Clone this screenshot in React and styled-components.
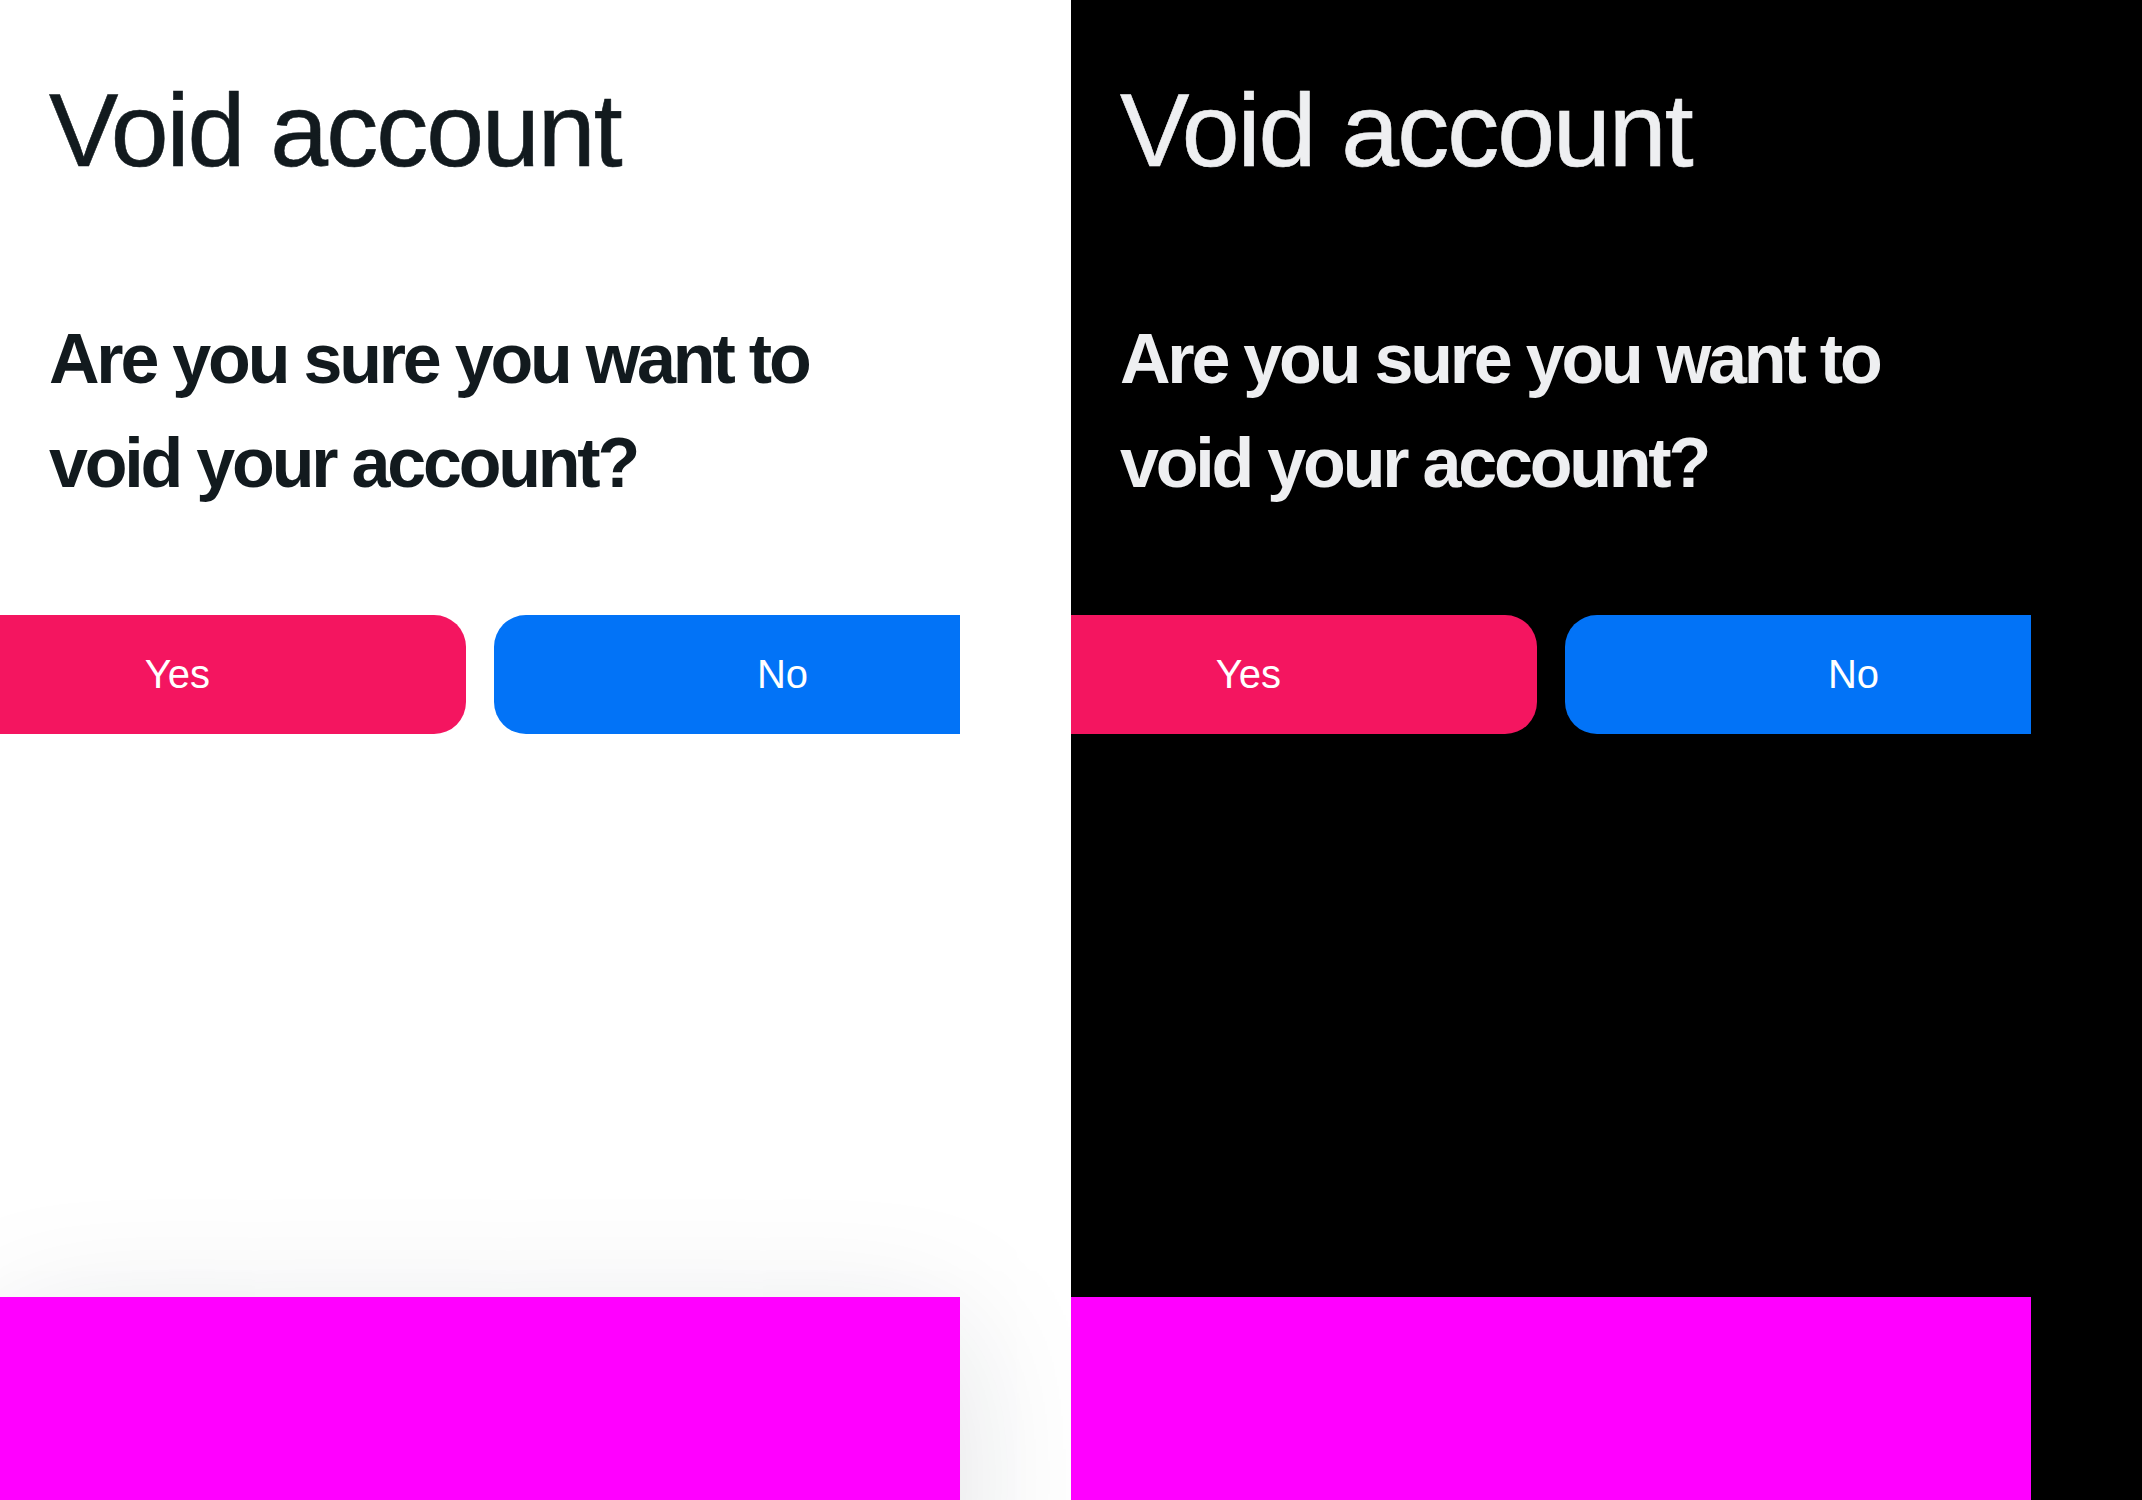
import React from "react";
import styled, { createGlobalStyle } from "styled-components";

const Global = createGlobalStyle`
  html, body {
    margin: 0;
    padding: 0;
    overflow: hidden;
  }
  body {
    font-family: "Liberation Sans", Arial, sans-serif;
  }
`;

const Page = styled.div`
  display: grid;
  grid-template-columns: 1fr 1fr;
  width: 2142px;
  height: 1500px;
`;

const Panel = styled.section`
  display: flex;
  flex-direction: column;
  height: 1500px;
  overflow: hidden;
  padding-top: 78px;
  box-sizing: border-box;
  background: ${(p) => (p.$dark ? "#000000" : "#ffffff")};
  color: ${(p) => (p.$dark ? "#eeeff1" : "#121a1e")};
  & > * {
    flex-shrink: 0;
  }
`;

const Title = styled.h1`
  margin: 0;
  padding-left: 49px;
  font-family: "Liberation Sans", Arial, sans-serif;
  font-weight: 400;
  font-size: 104px;
  line-height: 104px;
  letter-spacing: -2px;
  -webkit-text-stroke: 0.6px currentColor;
`;

const Prompt = styled.p`
  margin: 125px 0 0;
  padding-left: 49px;
  width: 820px;
  font-family: "Liberation Sans", Arial, sans-serif;
  font-weight: 700;
  font-size: 70px;
  line-height: 104px;
  letter-spacing: -3.2px;
`;

const ButtonClip = styled.div`
  width: 960px;
  height: 119px;
  margin-top: 100px;
  overflow: hidden;
`;

const ButtonRow = styled.div`
  display: flex;
  gap: 28px;
  margin-left: -111px;
`;

const ActionButton = styled.button`
  flex: 0 0 577px;
  height: 119px;
  border: none;
  border-radius: 32px;
  display: flex;
  align-items: center;
  justify-content: center;
  padding: 0;
  background: ${(p) => (p.$tone === "danger" ? "#f41560" : "#0273f7")};
  color: #ffffff;
  font-family: "Liberation Sans", Arial, sans-serif;
  font-size: 40px;
  font-weight: 400;
  cursor: pointer;
`;

const Sheet = styled.div`
  width: 960px;
  height: 420px;
  margin-top: 563px;
  background: #ff00ff;
  box-shadow: ${(p) =>
    p.$dark ? "none" : "0 30px 140px rgba(20, 30, 45, 0.13)"};
`;

function ConfirmPanel({ dark }) {
  return (
    <Panel $dark={dark}>
      <Title>Void account</Title>
      <Prompt>Are you sure you want to void your account?</Prompt>
      <ButtonClip>
        <ButtonRow>
          <ActionButton $tone="danger">Yes</ActionButton>
          <ActionButton $tone="primary">No</ActionButton>
        </ButtonRow>
      </ButtonClip>
      <Sheet $dark={dark} />
    </Panel>
  );
}

export default function App() {
  return (
    <>
      <Global />
      <Page>
        <ConfirmPanel />
        <ConfirmPanel dark />
      </Page>
    </>
  );
}
